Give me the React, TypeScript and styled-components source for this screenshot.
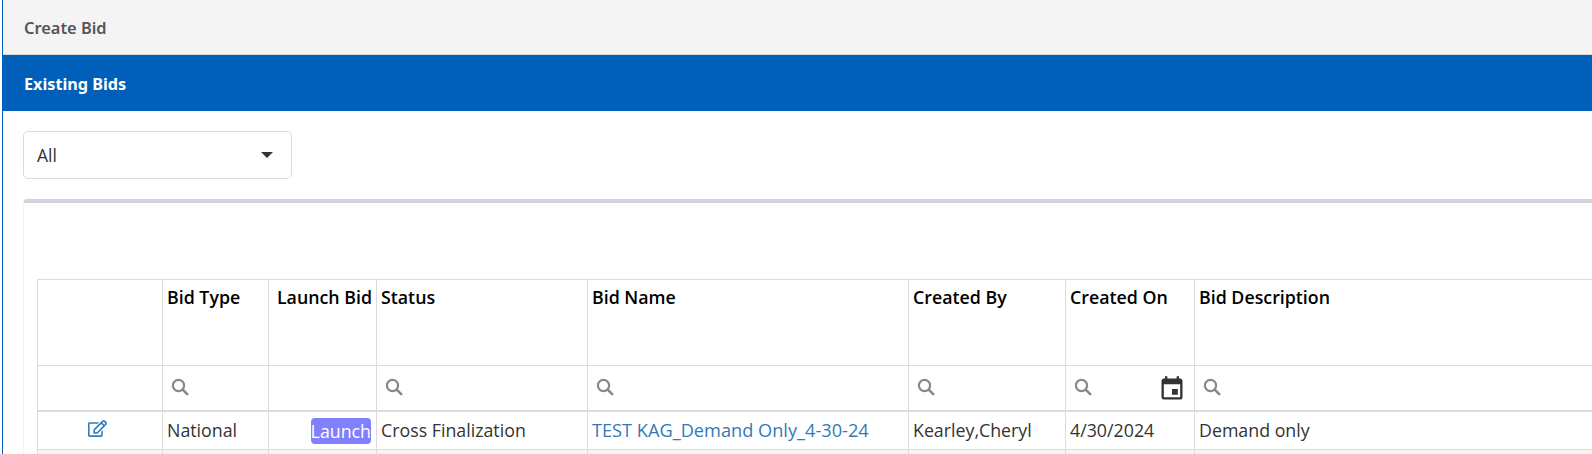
import React from 'react';
import styled, { createGlobalStyle } from 'styled-components';
import { FaRegEdit } from 'react-icons/fa';
import { MdEvent } from 'react-icons/md';

const COLUMNS = [
  { id: 'edit', label: '', width: 125 },
  { id: 'type', label: 'Bid Type', width: 106, filter: true },
  { id: 'launch', label: 'Launch Bid', width: 108, alignRight: true },
  { id: 'status', label: 'Status', width: 211, filter: true },
  { id: 'name', label: 'Bid Name', width: 321, filter: true },
  { id: 'by', label: 'Created By', width: 157, filter: true },
  { id: 'on', label: 'Created On', width: 129, filter: true, calendar: true },
  { id: 'desc', label: 'Bid Description', width: 460, filter: true },
];

const SearchIcon = () => (
  <SearchSvg viewBox="0 0 18 18" aria-hidden="true">
    <circle cx="7.5" cy="7.5" r="5.6" fill="none" stroke="currentColor" strokeWidth="2.2" />
    <path d="M11.7 11.7 L16.2 16.2" stroke="currentColor" strokeWidth="2.6" strokeLinecap="round" />
  </SearchSvg>
);

const App = (): React.JSX.Element => {
  return (
    <>
      <GlobalStyle />
      <Page>
        <CreateBar>Create Bid</CreateBar>
        <ExistingBar>Existing Bids</ExistingBar>
        <Content>
          <Select>
            <span>All</span>
            <Caret />
          </Select>
          <Card>
            <Table>
              <colgroup>
                {COLUMNS.map((col) => (
                  <col key={col.id} style={{ width: col.width }} />
                ))}
              </colgroup>
              <thead>
                <tr>
                  {COLUMNS.map((col) => (
                    <HeadCell key={col.id} $right={col.alignRight}>
                      {col.label}
                    </HeadCell>
                  ))}
                </tr>
                <tr>
                  {COLUMNS.map((col) => (
                    <FilterCell key={col.id}>
                      {col.filter && (
                        <FilterInner>
                          <SearchIcon />
                          {col.calendar && <CalendarIcon />}
                        </FilterInner>
                      )}
                    </FilterCell>
                  ))}
                </tr>
              </thead>
              <tbody>
                <tr>
                  <BodyCell $center>
                    <EditIcon />
                  </BodyCell>
                  <BodyCell>National</BodyCell>
                  <BodyCell $right>
                    <LaunchButton>Launch</LaunchButton>
                  </BodyCell>
                  <BodyCell>Cross Finalization</BodyCell>
                  <BodyCell>
                    <BidLink>TEST KAG_Demand Only_4-30-24</BidLink>
                  </BodyCell>
                  <BodyCell>Kearley,Cheryl</BodyCell>
                  <BodyCell>4/30/2024</BodyCell>
                  <BodyCell>Demand only</BodyCell>
                </tr>
                <StripedRow>
                  {COLUMNS.map((col) => (
                    <BodyCell key={col.id} />
                  ))}
                </StripedRow>
              </tbody>
            </Table>
          </Card>
        </Content>
      </Page>
    </>
  );
};

const GlobalStyle = createGlobalStyle`
  html, body {
    margin: 0;
    padding: 0;
    height: 454px;
    overflow: hidden;
    background: #fff;
  }
  * {
    box-sizing: border-box;
  }
`;

const Page = styled.div`
  width: 1590px;
  height: 454px;
  margin-left: 2px;
  overflow: hidden;
  border-left: 1px solid #0060b9;
  font-family: 'Open Sans', 'Noto Sans', sans-serif;
  color: #333;
`;

const CreateBar = styled.div`
  height: 55px;
  padding-left: 21px;
  display: flex;
  align-items: center;
  background: #f4f4f4;
  border-bottom: 1px solid #d8d8d8;
  color: #555;
  font-family: 'Noto Sans', sans-serif;
  font-size: 16.4px;
  font-weight: 600;
`;

const ExistingBar = styled.div`
  height: 56px;
  padding: 1px 0 0 21px;
  display: flex;
  align-items: center;
  background: #0060b9;
  color: #fff;
  font-family: 'Noto Sans', sans-serif;
  font-size: 16.2px;
  font-weight: 700;
`;

const Content = styled.div`
  padding: 20px 0 0 20px;
`;

const Select = styled.div`
  width: 269px;
  height: 48px;
  padding: 0 18px 0 13px;
  display: flex;
  align-items: center;
  justify-content: space-between;
  background: #fff;
  border: 1px solid #dcdcdc;
  border-radius: 5px;
  font-family: 'Open Sans', sans-serif;
  font-size: 17.5px;
  color: #333;
`;

const Caret = styled.span`
  width: 0;
  height: 0;
  border-left: 6px solid transparent;
  border-right: 6px solid transparent;
  border-top: 6px solid #333;
`;

const Card = styled.div`
  margin-top: 20px;
  padding: 76px 0 0 13px;
  height: 260px;
  overflow: hidden;
  background: #fff;
  border-top: 4px solid #cfd4df;
  border-left: 1px solid #f4f4f4;
  border-radius: 4px 0 0 0;
`;

const Table = styled.table`
  width: 1617px;
  table-layout: fixed;
  border-collapse: collapse;
  border-top: 1px solid #dcdcdc;
  font-size: 17.8px;
`;

const HeadCell = styled.th<{ $right?: boolean }>`
  height: 86px;
  padding: 5px 4px 0;
  vertical-align: top;
  text-align: ${(p) => (p.$right ? 'right' : 'left')};
  border: 1px solid #dcdcdc;
  color: #000;
  font-size: 17.8px;
  font-weight: 600;
  white-space: nowrap;
`;

const FilterCell = styled.td`
  height: 45px;
  padding: 0 4px;
  border: 1px solid #dcdcdc;
  border-bottom: 2px solid #dcdcdc;
`;

const FilterInner = styled.div`
  position: relative;
  display: flex;
  align-items: center;
  justify-content: space-between;
  padding: 0 0 2px 4px;
`;

const SearchSvg = styled.svg`
  width: 18px;
  height: 18px;
  color: #888;
`;

const CalendarIcon = styled(MdEvent)`
  position: absolute;
  right: 4px;
  top: -3px;
  width: 28px;
  height: 28px;
  color: #333;
`;

const BodyCell = styled.td<{ $center?: boolean; $right?: boolean }>`
  height: 39px;
  padding: 0 4px;
  text-align: ${(p) => (p.$center ? 'center' : p.$right ? 'right' : 'left')};
  border: 1px solid #dcdcdc;
  color: #333;
  white-space: nowrap;
`;

const StripedRow = styled.tr`
  background: #f5f5f5;
`;

const EditIcon = styled(FaRegEdit)`
  width: 19px;
  height: 17px;
  margin: 0 6px 0 0;
  color: #337ab7;
`;

const LaunchButton = styled.span`
  display: inline-block;
  height: 26px;
  line-height: 27px;
  margin: 2px 1px 0 0;
  padding: 0;
  background: #8080ff;
  color: #fff;
  border-radius: 4px;
  vertical-align: middle;
`;

const BidLink = styled.a`
  color: #337ab7;
  font-size: 18.2px;
`;

export default App;
